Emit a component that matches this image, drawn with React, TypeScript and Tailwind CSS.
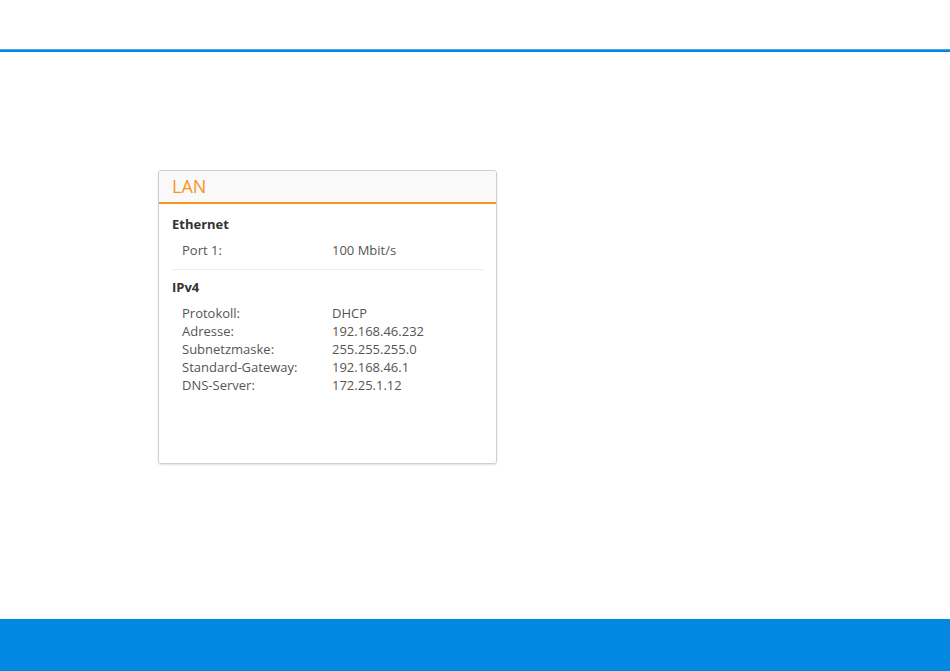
const ethernet = [{ label: 'Port 1:', value: '100 Mbit/s' }];

const ipv4 = [
  { label: 'Protokoll:', value: 'DHCP' },
  { label: 'Adresse:', value: '192.168.46.232' },
  { label: 'Subnetzmaske:', value: '255.255.255.0' },
  { label: 'Standard-Gateway:', value: '192.168.46.1' },
  { label: 'DNS-Server:', value: '172.25.1.12' },
];

function Rows({ rows }: { rows: { label: string; value: string }[] }) {
  return (
    <div className="pl-[10px]">
      {rows.map((row) => (
        <div key={row.label} className="flex h-[18px] items-center text-[13px] text-[#555]">
          <span className="w-[150px]">{row.label}</span>
          <span>{row.value}</span>
        </div>
      ))}
    </div>
  );
}

export default function App() {
  return (
    <div className="flex h-[671px] w-[950px] flex-col bg-white font-['Open_Sans',sans-serif]">
      {/* top bar */}
      <div className="h-[49px]"></div>
      <div className="h-[3px] border-t border-[#4aa8ee] bg-[#0088e2]"></div>

      <main className="flex-1 pl-[158px] pt-[118px]">
        <div className="h-[294px] w-[339px] overflow-hidden rounded-[3px] border border-[#cfcfcf] shadow-[0_1px_2px_rgba(0,0,0,0.12)]">
          <div className="flex h-[33px] items-center border-b-2 border-[#f7941d] bg-[#f9f9f9] pl-[13px]">
            <h2 className="text-[18px] font-normal text-[#f7941d]">LAN</h2>
          </div>

          <div className="pl-[13px] pr-[12px] pt-[12px]">
            <h3 className="flex h-[18px] items-center text-[13px] font-bold text-[#333]">Ethernet</h3>
            <div className="mt-[8px]">
              <Rows rows={ethernet} />
            </div>
            <div className="mt-[9px] border-t border-[#ececec]"></div>

            <h3 className="mt-[9px] flex h-[18px] items-center text-[13px] font-bold text-[#333]">IPv4</h3>
            <div className="mt-[8px]">
              <Rows rows={ipv4} />
            </div>
          </div>
        </div>
      </main>

      {/* footer */}
      <div className="h-[52px] bg-[#0088e2]"></div>
    </div>
  );
}
